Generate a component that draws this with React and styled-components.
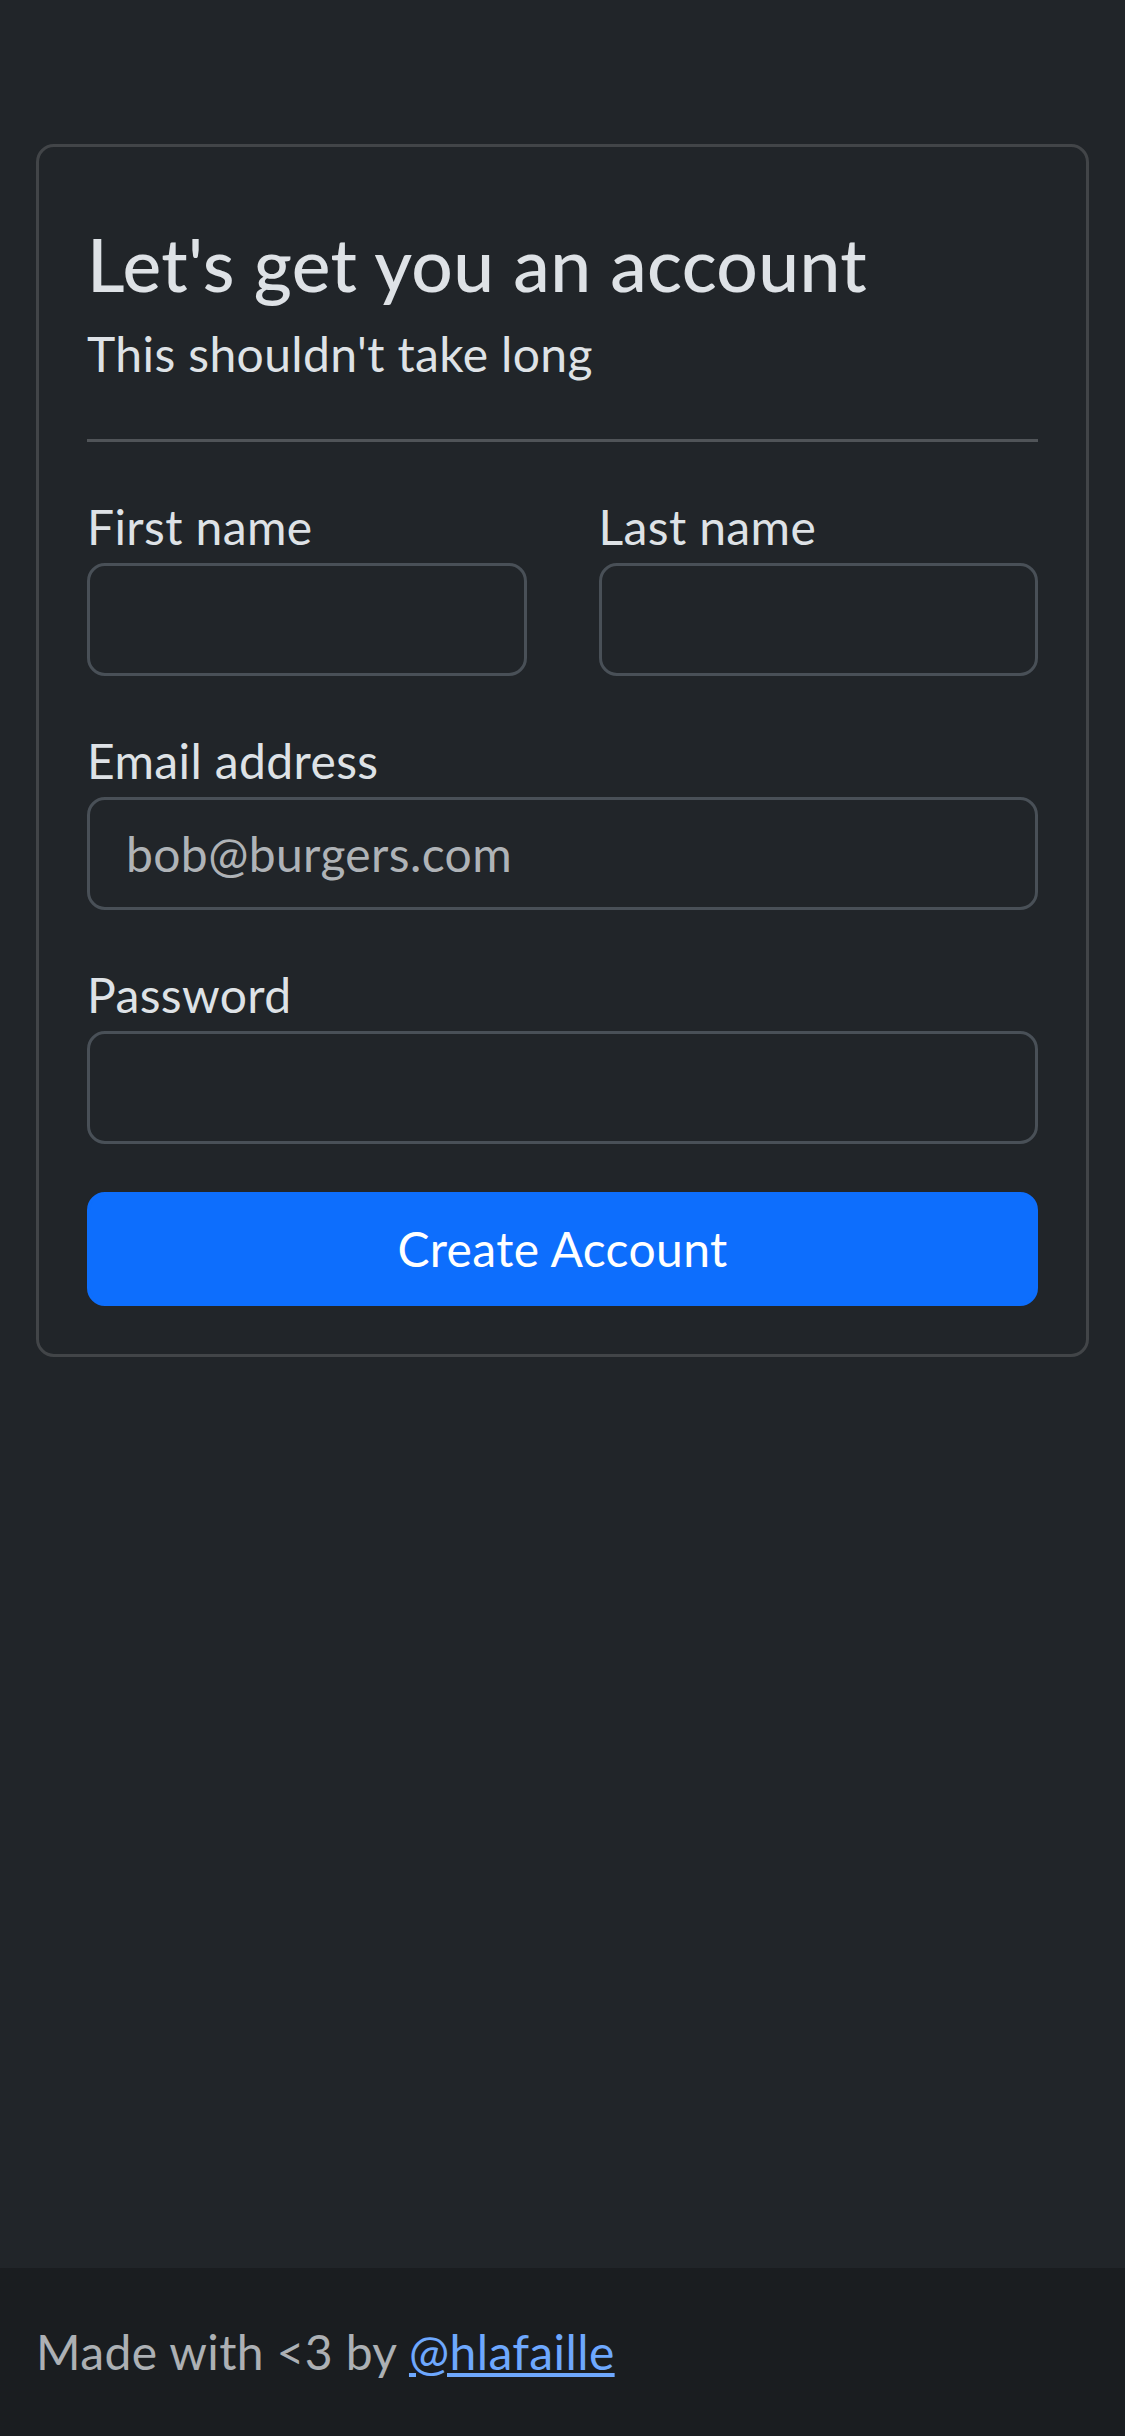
import styled, { createGlobalStyle } from "styled-components";

const GlobalStyle = createGlobalStyle`
  html, body {
    margin: 0;
    padding: 0;
    background: #212529;
    color: #dee2e6;
    font-family: Lato, "Noto Sans", "Liberation Sans", sans-serif;
    font-size: 48px;
    line-height: 1.5;
    letter-spacing: 0.008em;
  }
  *, *::before, *::after {
    box-sizing: border-box;
  }
`;

const Page = styled.div`
  min-height: 100vh;
  display: flex;
  flex-direction: column;
`;

const Main = styled.main`
  flex: 1;
  padding: 144px 36px 0;
`;

const Card = styled.div`
  border: 3px solid rgba(255, 255, 255, 0.15);
  border-radius: 18px;
  padding: 48px;
`;

const Title = styled.h2`
  margin: 26px 0 9px;
  font-size: 73px;
  font-weight: 500;
  line-height: 1.2;
`;

const Subtitle = styled.p`
  margin: 0;
`;

const Divider = styled.hr`
  margin: 49px 0 48px;
  border: 0;
  border-top: 3px solid #505458;
`;

const Row = styled.div`
  display: grid;
  grid-template-columns: 1fr 1fr;
  column-gap: 72px;
`;

const Field = styled.div`
  margin-bottom: 48px;
`;

const Label = styled.label`
  display: block;
  line-height: 73px;
`;

const Input = styled.input`
  display: block;
  width: 100%;
  height: 113px;
  padding: 18px 36px;
  background: #212529;
  color: #dee2e6;
  border: 3px solid #495057;
  border-radius: 18px;
  font: inherit;
  letter-spacing: inherit;
  outline: none;

  &::placeholder {
    color: #afb3b7;
    opacity: 1;
  }
`;

const Button = styled.button`
  display: block;
  width: 100%;
  height: 114px;
  padding: 18px 36px;
  background: #0d6efd;
  color: #fff;
  border: 3px solid #0d6efd;
  border-radius: 18px;
  font: inherit;
  letter-spacing: inherit;
  cursor: pointer;
`;

const Footer = styled.footer`
  background: #1a1d20;
  padding: 48px 36px;
  color: rgba(222, 226, 230, 0.75);
`;

const Link = styled.a`
  color: #6ea8fe;
  text-decoration: underline;
`;

const fields = [
  { id: "email", label: "Email address", type: "email", placeholder: "bob@burgers.com" },
  { id: "password", label: "Password", type: "password" },
];

export default function App() {
  return (
    <Page>
      <GlobalStyle />
      <Main>
        <Card>
          <Title>Let's get you an account</Title>
          <Subtitle>This shouldn't take long</Subtitle>
          <Divider />
          <form onSubmit={(e) => e.preventDefault()}>
            <Row>
              <Field>
                <Label htmlFor="first">First name</Label>
                <Input id="first" type="text" />
              </Field>
              <Field>
                <Label htmlFor="last">Last name</Label>
                <Input id="last" type="text" />
              </Field>
            </Row>
            {fields.map((f) => (
              <Field key={f.id}>
                <Label htmlFor={f.id}>{f.label}</Label>
                <Input id={f.id} type={f.type} placeholder={f.placeholder} />
              </Field>
            ))}
            <Button type="submit">Create Account</Button>
          </form>
        </Card>
      </Main>
      <Footer>
        Made with &lt;3 by <Link href="#">@hlafaille</Link>
      </Footer>
    </Page>
  );
}
